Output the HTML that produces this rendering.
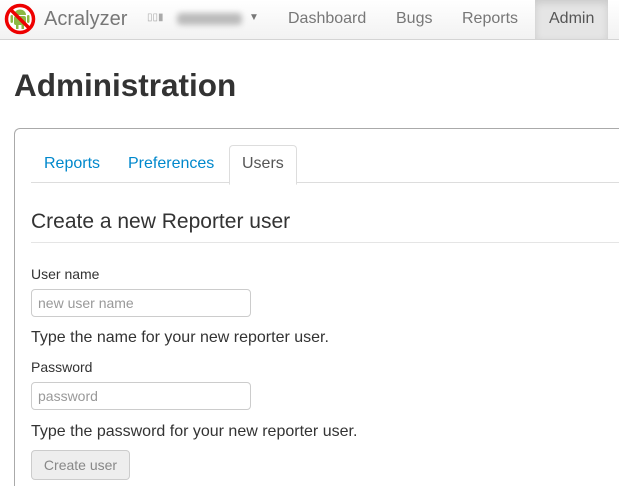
<!DOCTYPE html><html style="overflow:hidden;height:486px"><head><style>
body{margin:0;width:619px;height:486px;overflow:hidden;font-family:"Liberation Sans",sans-serif;background:#fff;color:#333;position:relative}
.nav{position:absolute;left:0;top:0;width:619px;height:39px;background:linear-gradient(#fff,#f2f2f2);border-bottom:1px solid #d4d4d4}
.nav span{position:absolute;top:10px;font-size:16px;color:#777}
.adm{position:absolute;left:535px;top:0;width:73px;height:39px;background:#e5e5e5;box-shadow:inset 0 3px 8px rgba(0,0,0,.12)}
h1{position:absolute;left:14px;top:67px;margin:0;font-size:31.5px;font-weight:bold;color:#333}
.box{position:absolute;left:14px;top:128px;width:620px;height:357px;border:1px solid #aaa;border-bottom:none;border-right:none;border-radius:6px 0 0 0}
.tl{position:absolute;left:31px;top:182px;width:588px;border-top:1px solid #ddd}
.tab{position:absolute;top:155px;font-size:16px;color:#0088cc}
.ut{position:absolute;left:229px;top:145px;width:66px;height:38px;border:1px solid #ddd;border-bottom:1px solid #fff;border-radius:4px 4px 0 0;background:#fff}
.t{position:absolute;font-size:14px;color:#333}
input{position:absolute;left:31px;height:28px;border:1px solid #ccc;border-radius:4px;padding:0 6px;font:14px "Liberation Sans",sans-serif;box-sizing:border-box;width:220px}
input::placeholder{color:#999}
</style></head><body>
<div class="nav">
<svg style="position:absolute;left:4px;top:3px" width="32" height="32" viewBox="0 0 32 32"><circle cx="16" cy="16" r="13.5" fill="#fff" stroke="#e00" stroke-width="3.5"/><rect x="10" y="13" width="12" height="9" rx="2" fill="#8cb843"/><path d="M10 12a6 5.5 0 0 1 12 0z" fill="#8cb843"/><rect x="6.5" y="12" width="2.5" height="8" rx="1.2" fill="#8cb843"/><rect x="23" y="12" width="2.5" height="8" rx="1.2" fill="#8cb843"/><rect x="12" y="21" width="2.5" height="5" fill="#8cb843"/><rect x="17.5" y="21" width="2.5" height="5" fill="#8cb843"/><line x1="7" y1="7" x2="25" y2="25" stroke="#e00" stroke-width="3.5"/></svg>
<span style="left:44px;top:8px;font-size:20px">Acralyzer</span>
<span style="left:147px;top:12px;font-size:10px;color:#aaa">▯▯▮</span>
<div style="position:absolute;left:177px;top:13px;width:65px;height:12px;background:#bbb;filter:blur(3px);border-radius:4px"></div>
<span style="left:249px;top:12px;font-size:10px;color:#777">▼</span>
<span style="left:288px">Dashboard</span>
<span style="left:396px">Bugs</span>
<span style="left:462px">Reports</span>
<div class="adm"></div><span style="left:549px;color:#555">Admin</span>
</div>
<h1>Administration</h1>
<div class="box"></div>
<div class="tl"></div>
<div class="ut"></div>
<span class="tab" style="left:44px">Reports</span>
<span class="tab" style="left:128px">Preferences</span>
<span class="tab" style="left:242px;color:#555">Users</span>
<div class="t" style="left:31px;top:210px;font-size:21px">Create a new Reporter user</div>
<div style="position:absolute;left:31px;top:242px;width:588px;border-top:1px solid #e5e5e5"></div>
<div class="t" style="left:31px;top:266px">User name</div>
<input style="top:289px" placeholder="new user name">
<div class="t" style="left:31px;top:329px;font-size:16px">Type the name for your new reporter user.</div>
<div class="t" style="left:31px;top:359px">Password</div>
<input style="top:382px" placeholder="password">
<div class="t" style="left:31px;top:423px;font-size:16px">Type the password for your new reporter user.</div>
<div style="position:absolute;left:31px;top:450px;width:97px;height:28px;border:1px solid #ccc;border-radius:4px;background:#eee;color:#888;font-size:14px;text-align:center;line-height:28px">Create user</div>
</body></html>
